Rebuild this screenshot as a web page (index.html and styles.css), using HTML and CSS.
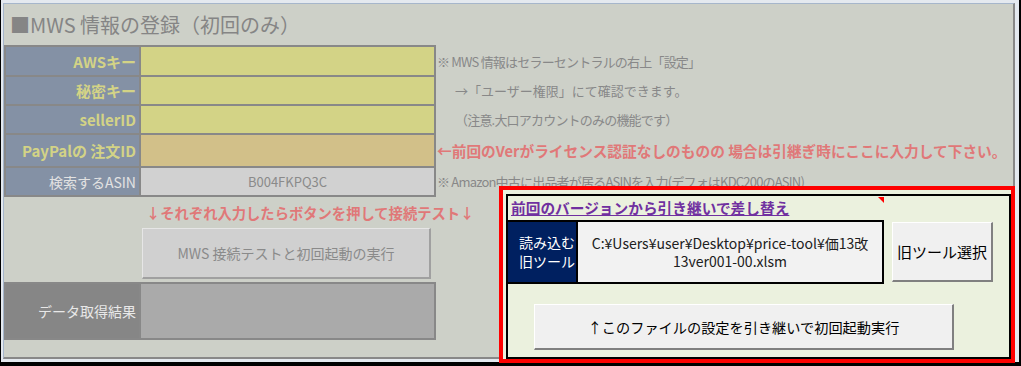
FILE: index.html
```html
<!DOCTYPE html>
<html lang="ja">
<head>
    <meta charset="UTF-8">
    <title>MWS情報の登録</title>
    <link rel="stylesheet" href="styles.css">
</head>
<body>
    <div class="frame">
        <div class="sheet">
            <h1 class="title">■MWS 情報の登録（初回のみ）</h1>
            <div class="main">
                <div class="left">
                    <div class="table">
                        <div class="label">AWSキー</div>
                        <div class="value yellow"></div>
                        <div class="label">秘密キー</div>
                        <div class="value yellow"></div>
                        <div class="label">sellerID</div>
                        <div class="value yellow"></div>
                        <div class="label">PayPalの 注文ID</div>
                        <div class="value tan"></div>
                        <div class="label plain">検索するASIN</div>
                        <div class="value gray">B004FKPQ3C</div>
                    </div>
                    <p class="hint">↓それぞれ入力したらボタンを押して接続テスト↓</p>
                    <button class="test-btn" type="button">MWS 接続テストと初回起動の実行</button>
                    <div class="result">
                        <div class="result-label">データ取得結果</div>
                        <div class="result-value"></div>
                    </div>
                </div>
                <div class="notes">
                    <p class="tight">※ MWS 情報はセラーセントラルの右上「設定」</p>
                    <p class="indent">→「ユーザー権限」にて確認できます。</p>
                    <p class="indent tight">（注意.大口アカウントのみの機能です）</p>
                    <p class="warn">←前回のVerがライセンス認証なしのものの 場合は引継ぎ時にここに入力して下さい。</p>
                    <p class="tight">※ Amazon中古に出品者が居るASINを入力(デフォはKDC200のASIN)</p>
                </div>
            </div>
        </div>
    </div>

    <div class="overlay">
        <div class="panel">
            <span class="comment-mark"></span>
            <p class="panel-link">前回のバージョンから引き継いで差し替え</p>
            <div class="load-row">
                <div class="load-box">
                    <div class="load-label">読み込む<br>旧ツール</div>
                    <div class="load-path">C:¥Users¥user¥Desktop¥price-tool¥価13改<br>13ver001-00.xlsm</div>
                </div>
                <button class="pick-btn" type="button">旧ツール選択</button>
            </div>
            <button class="run-btn" type="button">↑このファイルの設定を引き継いで初回起動実行</button>
        </div>
    </div>
</body>
</html>
```

FILE: styles.css
```css
body {
    margin: 0;
    width: 1021px;
    height: 366px;
    background-color: #000;
    font-family: "Noto Sans CJK JP", sans-serif;
    position: relative;
    overflow: hidden;
}

.frame {
    margin-left: 1px;
    width: 1018px;
    height: 362px;
    box-sizing: border-box;
    padding: 3px 0 0 2px;
    background-color: #e4e9ef;
}

.sheet {
    width: 1012px;
    height: 356px;
    box-sizing: border-box;
    border-top: 1px solid #a6b6cb;
    border-left: 1px solid #a6b6cb;
    border-right: 2px solid #888;
    border-bottom: 2px solid #888;
    background-color: #cdd0c8;
}

.title {
    margin: 0;
    height: 41px;
    line-height: 41px;
    padding-left: 6px;
    font-size: 20px;
    font-weight: normal;
    color: #858585;
    white-space: nowrap;
}

.main {
    display: flex;
}

.left {
    width: 432px;
    flex-shrink: 0;
}

.table {
    display: grid;
    grid-template-columns: 133px 293px;
    grid-template-rows: 28px 27px 27px 31px 27px;
    gap: 2px;
    border: 2px solid #888;
    background-color: #888;
}

.label {
    display: flex;
    align-items: center;
    justify-content: flex-end;
    padding-right: 3px;
    background-color: #8491a5;
    color: #d3d386;
    font-size: 15px;
    font-weight: bold;
    white-space: nowrap;
}

.label.plain {
    color: #e2e2e2;
    font-weight: normal;
    font-size: 14px;
}

.value {
    display: flex;
    align-items: center;
    justify-content: center;
    font-size: 13px;
    color: #8a8a8a;
}

.yellow { background-color: #d3d386; }
.tan { background-color: #d2c089; }
.gray { background-color: #d1d1d1; }

.hint {
    margin: 0;
    height: 31px;
    line-height: 31px;
    padding-left: 142px;
    font-size: 14.3px;
    font-weight: bold;
    color: #e07878;
    white-space: nowrap;
}

.test-btn {
    display: block;
    margin: 0 0 3px 138px;
    width: 289px;
    height: 51px;
    padding: 0;
    background-color: #d0d0d0;
    border-top: 1px solid #e6e6e6;
    border-left: 1px solid #e6e6e6;
    border-right: 2px solid #a0a0a0;
    border-bottom: 2px solid #a0a0a0;
    font-family: inherit;
    font-size: 14px;
    color: #8a8a8a;
}

.result {
    display: grid;
    grid-template-columns: 133px 295px;
    height: 58px;
    box-sizing: border-box;
    border: 2px solid #888;
    background-color: #868686;
}

.result-label {
    display: flex;
    align-items: center;
    justify-content: flex-end;
    padding-right: 3px;
    font-size: 14px;
    color: #e8e8e8;
}

.result-value {
    background-color: #aaaaaa;
    border-left: 2px solid #888;
}

.notes {
    display: grid;
    grid-template-rows: 28px 27px 27px 31px 27px;
    gap: 2px;
    padding: 2px 0 0 1px;
}

.notes p {
    margin: 0;
    display: flex;
    align-items: center;
    font-size: 13px;
    color: #888;
    white-space: nowrap;
}

.notes .tight {
    letter-spacing: -0.8px;
}

.notes .indent {
    padding-left: 18px;
}

.notes .warn {
    font-size: 14.7px;
    font-weight: bold;
    color: #e07878;
}

/* floating shape over the sheet */
.overlay {
    position: absolute;
    left: 499px;
    top: 186px;
    width: 516px;
    height: 177px;
    box-sizing: border-box;
    border: 4px solid #ff0000;
    padding: 4px 0 0 3px;
    background-color: #ebf1de;
}

.panel {
    position: relative;
    width: 505px;
    height: 165px;
    box-sizing: border-box;
    border: 2px solid #000;
    background-color: #ebf1de;
}

.comment-mark {
    position: absolute;
    top: 1px;
    left: 370px;
    width: 0;
    height: 0;
    border-top: 6px solid #ff0000;
    border-left: 6px solid transparent;
}

.panel-link {
    margin: 0;
    height: 24px;
    line-height: 24px;
    padding-left: 3px;
    font-size: 14.7px;
    font-weight: bold;
    color: #7030a0;
    text-decoration: underline;
    white-space: nowrap;
}

.load-row {
    display: flex;
    align-items: flex-start;
    margin-left: -2px;
}

.load-box {
    display: flex;
    width: 378px;
    height: 64px;
    box-sizing: border-box;
    border: 2px solid #000;
}

.load-label {
    width: 68px;
    flex-shrink: 0;
    display: flex;
    align-items: center;
    justify-content: flex-end;
    padding-right: 1px;
    box-sizing: border-box;
    background-color: #002060;
    color: #fff;
    font-size: 14px;
    line-height: 19px;
    text-align: right;
}

.load-path {
    flex: 1;
    display: flex;
    align-items: center;
    justify-content: center;
    border-left: 2px solid #000;
    background-color: #f2f2f2;
    color: #202020;
    font-size: 14px;
    line-height: 18px;
    text-align: center;
}

.pick-btn {
    margin: 2px 0 0 8px;
    width: 101px;
    height: 60px;
    padding: 0;
    background-color: #f0f0f0;
    border-top: 1px solid #fff;
    border-left: 1px solid #fff;
    border-right: 2px solid #808080;
    border-bottom: 2px solid #808080;
    font-family: inherit;
    font-size: 15px;
    color: #000;
}

.run-btn {
    display: block;
    margin: 20px 0 0 26px;
    width: 420px;
    height: 46px;
    padding: 0;
    background-color: #f0f0f0;
    border-top: 1px solid #fff;
    border-left: 1px solid #fff;
    border-right: 2px solid #808080;
    border-bottom: 2px solid #808080;
    font-family: inherit;
    font-size: 14.2px;
    color: #000;
}
```
